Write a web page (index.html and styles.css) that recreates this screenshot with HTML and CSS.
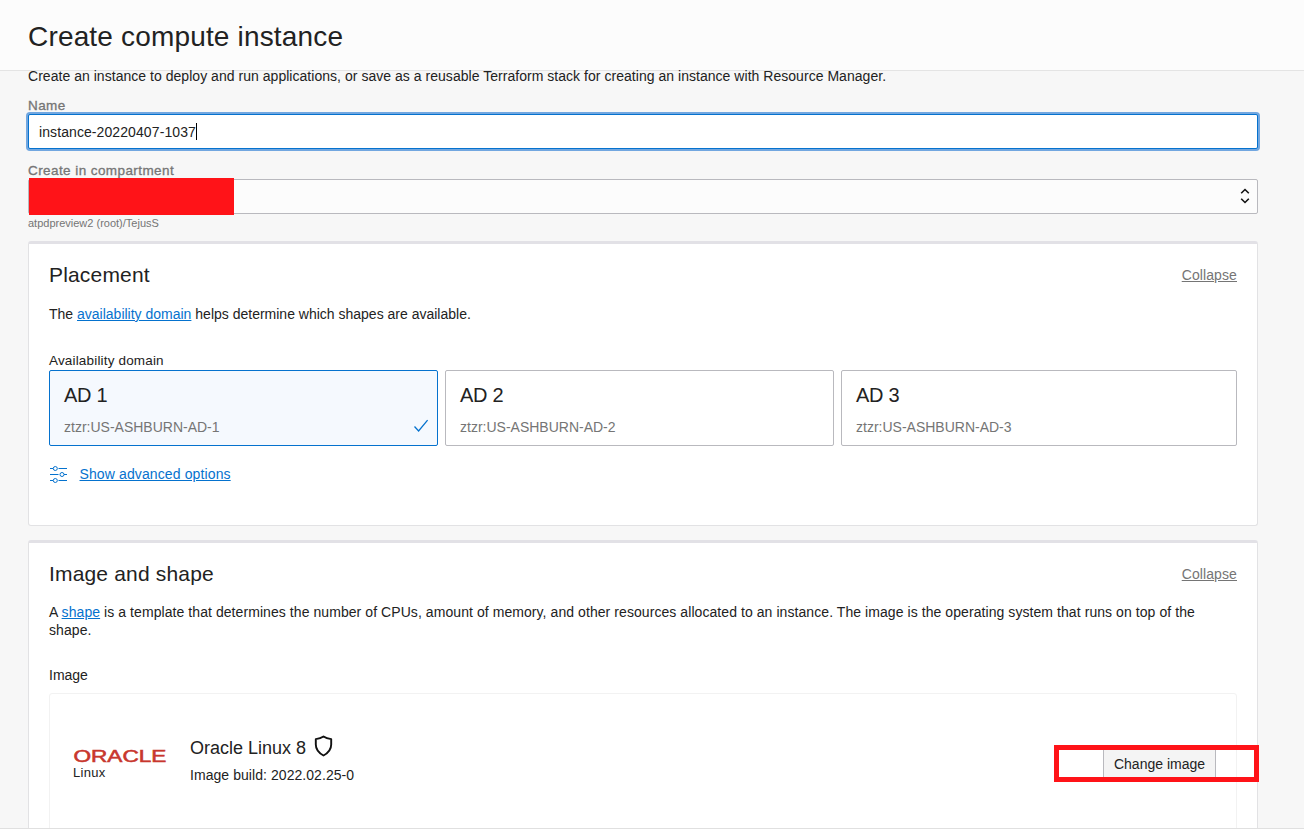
FILE: index.html
```html
<!DOCTYPE html>
<html lang="en">
<head>
<meta charset="utf-8">
<title>Create compute instance</title>
<link rel="stylesheet" href="styles.css">
</head>
<body>
<div class="page">
  <header class="page-header"><h1 class="page-title">Create compute instance</h1></header>
  <main class="content">
    <p class="intro">Create an instance to deploy and run applications, or save as a reusable Terraform stack for creating an instance with Resource Manager.</p>
    <div class="field">
      <div class="field-label">Name</div>
      <div class="input"><span class="input-value">instance-20220407-1037</span><span class="caret"></span></div>
    </div>
    <div class="field">
      <div class="field-label">Create in compartment</div>
      <div class="select">
        <svg class="select-arrows" width="10" height="16" viewBox="0 0 10 16"><path d="M1.2 5.2 5 1.5 8.8 5.2M1.2 10.8 5 14.5 8.8 10.8"/></svg>
        <div class="redaction"></div>
      </div>
      <div class="hint">atpdpreview2 (root)/TejusS</div>
    </div>

    <section class="card placement">
      <div class="card-head"><h2 class="card-title">Placement</h2><a class="collapse">Collapse</a></div>
      <p class="text">The <a class="link">availability domain</a> helps determine which shapes are available.</p>
      <div class="group-label">Availability domain</div>
      <div class="domains">
        <div class="domain selected">
          <div class="domain-name">AD 1</div>
          <div class="domain-id">ztzr:US-ASHBURN-AD-1</div>
          <svg class="check" width="16" height="14" viewBox="0 0 16 14"><path d="M1.5 7.5 5.6 12 14.6 1.2"/></svg>
        </div>
        <div class="domain">
          <div class="domain-name">AD 2</div>
          <div class="domain-id">ztzr:US-ASHBURN-AD-2</div>
        </div>
        <div class="domain">
          <div class="domain-name">AD 3</div>
          <div class="domain-id">ztzr:US-ASHBURN-AD-3</div>
        </div>
      </div>
      <div class="advanced">
        <svg class="sliders" width="19" height="18" viewBox="0 0 19 18"><path d="M1 3.5h3M9.5 3.5H18M1 9.5h8.5M15 9.5h3M1 15.5h3M9.5 15.5H18"/><circle cx="6.3" cy="3.5" r="2"/><circle cx="13" cy="9.5" r="2"/><circle cx="6.3" cy="15.5" r="2"/></svg>
        <a class="link advanced-link">Show advanced options</a>
      </div>
    </section>

    <section class="card shape">
      <div class="card-head"><h2 class="card-title">Image and shape</h2><a class="collapse">Collapse</a></div>
      <p class="text">A <a class="link">shape</a> is a template that determines the number of CPUs, amount of memory, and other resources allocated to an instance. The image is the operating system that runs on top of the<br>shape.</p>
      <div class="group-label">Image</div>
      <div class="image-box">
        <div class="logo">
          <svg class="logo-mark" width="94" height="16" viewBox="0 0 94 16"><text x="0.4" y="14.7" textLength="93" lengthAdjust="spacingAndGlyphs">ORACLE</text></svg>
          <div class="logo-sub">Linux</div>
        </div>
        <div class="image-info">
          <div class="image-name">Oracle Linux 8<svg class="shield" width="19" height="22" viewBox="0 0 19 22"><path d="M9.5 1.4C7.4 2.9 4.8 3.7 1.8 4.1V9.500c0 4.700 2.500 8.200 7.700 11 5.200-2.800 7.700-6.300 7.700-11V4.100C14.200 3.700 11.600 2.900 9.500 1.400Z"/></svg></div>
          <div class="image-build">Image build: 2022.02.25-0</div>
        </div>
        <div class="button">Change image</div>
        <div class="highlight"></div>
      </div>
    </section>
  </main>
</div>
</body>
</html>
```
FILE: styles.css
```css
* { box-sizing: border-box; }
body {
  margin: 0;
  background: #f7f7f7;
  color: #222;
  font: 14px/18px "Liberation Sans", Arial, sans-serif;
}
h1, h2, p { margin: 0; font-weight: 400; }
.page { display: flex; flex-direction: column; height: 829px; overflow: hidden; border-bottom: 1px solid #e0e0e0; }
.page-header { flex: none; display: flex; align-items: center; height: 71px; padding: 4px 28px 0; background: #fcfcfc; border-bottom: 1px solid #e4e4e4; }
.page-title { font-size: 28px; line-height: 34px; letter-spacing: 0.17px; }
.content { flex: 1; min-height: 0; padding: 0 46px 0 28px; }
.intro { margin-bottom: 14px; height: 11px; line-height: 10px; white-space: nowrap; letter-spacing: 0.034px; }

.field { margin-bottom: 12px; }
.field-label { height: 18px; padding-top: 1px; line-height: 17px; color: #757575; font-size: 13.5px; letter-spacing: 0.42px; -webkit-text-stroke: 0.3px #757575; }
.input { display: flex; align-items: center; height: 35px; padding: 0 10px; background: #fff; border: 1px solid #0572ce; border-radius: 2px; box-shadow: 0 0 0 2px #72a7e0; }
.input-value { letter-spacing: 0.09px; }
.caret { width: 1px; height: 17px; background: #000; }
.select { position: relative; display: flex; align-items: center; justify-content: flex-end; height: 35px; padding: 0 7px 2px 0; background: #fcfcfc; border: 1px solid #b9b9be; border-radius: 2px; }
.select-arrows path { fill: none; stroke: #111; stroke-width: 1.6; }
.redaction { position: absolute; left: 0; top: -2px; width: 205px; height: 37px; background: #ff1318; }
.hint { height: 15px; margin-top: 2px; font-size: 11px; line-height: 15px; color: #757575; }

.card { background: #fff; border: 1px solid #e2e2e4; border-top: 3px solid #e2e1e6; border-radius: 3px; padding: 18px 20px 0; }
.placement { height: 285px; margin-bottom: 14px; margin-top: -2px; }
.shape { height: 320px; }
.card-head { display: flex; justify-content: space-between; align-items: center; height: 26px; }
.card-title { font-size: 21px; line-height: 26px; letter-spacing: 0.17px; }
.collapse { color: #757575; text-decoration: underline; text-underline-offset: 1px; letter-spacing: 0.1px; }
.link { color: #0572ce; text-decoration: underline; text-underline-offset: 1px; }
.text { margin-top: 17px; white-space: nowrap; }
.shape .text { margin-top: 16px; letter-spacing: 0.07px; }
.group-label { margin-top: 28px; height: 18px; }
.placement .group-label { font-size: 13.5px; line-height: 20px; letter-spacing: 0.17px; }
.shape .group-label { margin-top: 27px; }
.domains { display: grid; grid-template-columns: 389px 389px 1fr; gap: 7px; margin-top: 1px; }
.domain { position: relative; height: 76px; padding: 12px 14px 0; border: 1px solid #b9b9be; border-radius: 2px; }
.selected { background: #f5f9fe; border-color: #0572ce; }
.domain-name { font-size: 20px; line-height: 24px; letter-spacing: -0.3px; }
.domain-id { margin-top: 11px; color: #757575; }
.check { position: absolute; right: 8px; bottom: 12px; }
.check path { fill: none; stroke: #0572ce; stroke-width: 1.3; }
.advanced { display: flex; align-items: center; gap: 11.5px; margin-top: 19px; height: 18px; }
.advanced-link { letter-spacing: 0.12px; }
.sliders path, .sliders circle { fill: none; stroke: #0572ce; stroke-width: 1; }

.image-box { position: relative; display: flex; height: 180px; margin-top: 9px; padding: 42px 20px 0 23px; border: 1px solid #f2f2f2; border-radius: 3px; }
.logo { width: 117px; padding-top: 11px; }
.logo-mark { display: block; overflow: visible; }
.logo-mark text { font: 16.5px "Liberation Sans", Arial, sans-serif; fill: #c8372e; stroke: #c8372e; stroke-width: 0.55px; }
.logo-sub { font-size: 13px; line-height: 16px; margin-top: 2px; letter-spacing: 0.3px; }
.image-info { flex: 1; }
.image-name { display: flex; align-items: center; gap: 8px; height: 24px; font-size: 18px; line-height: 22px; }
.shield { margin-top: -4px; }
.shield path { fill: none; stroke: #111; stroke-width: 1.9; stroke-linejoin: round; }
.image-build { margin-top: 6px; letter-spacing: 0.06px; }
.button { width: 113px; height: 32px; margin-top: 12px; line-height: 30px; text-align: center; background: #f4f4f4; border: 1px solid #b9b9be; border-radius: 2px; }
.highlight { position: absolute; left: 1004px; top: 51px; width: 205px; height: 37px; border: 5px solid #ff1318; }
```
